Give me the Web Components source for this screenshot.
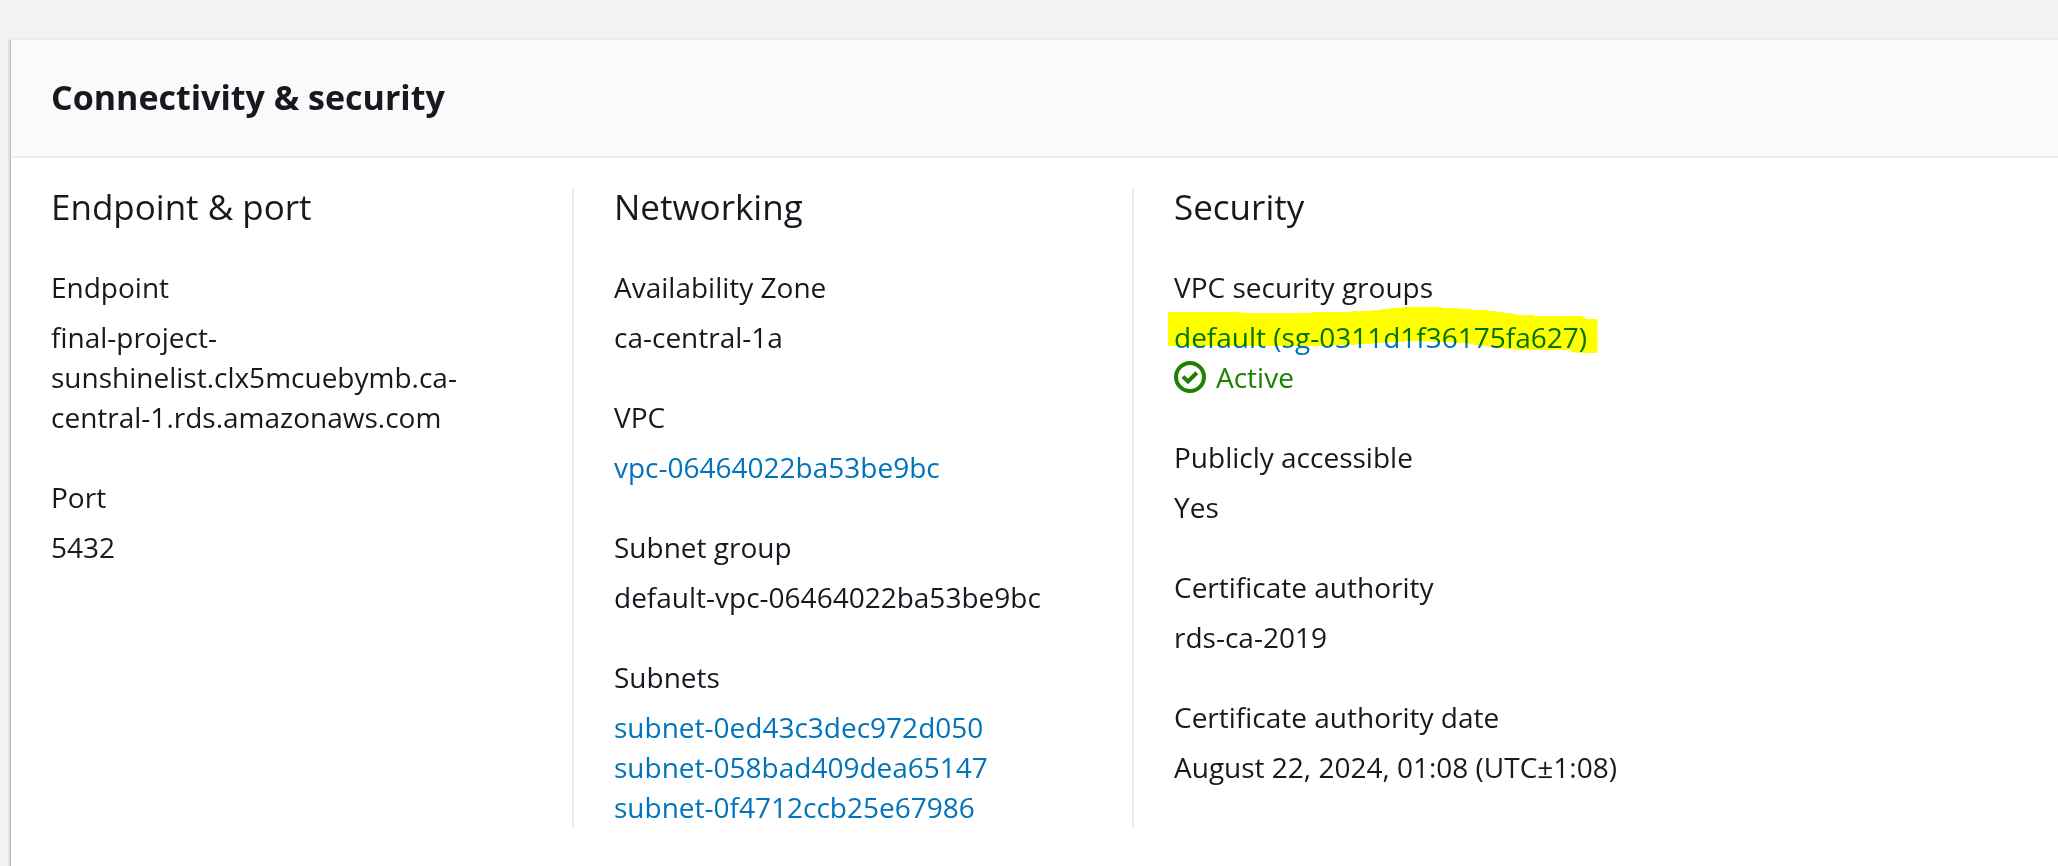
<!DOCTYPE html>
<html lang="en">
<head>
<meta charset="utf-8">
<title>Connectivity &amp; security</title>
<style>
  html { height: 100%; overflow: hidden; }
  body {
    box-sizing: border-box;
    min-height: 100%;
    margin: 0;
    padding: 38px 0 0 11px;
    display: flex;
    flex-direction: column;
    background: #f2f3f3;
    color: #16191f;
    font: 28px/40px "Open Sans", "Noto Sans", sans-serif;
  }
</style>
</head>
<body>

<rds-panel heading="Connectivity &amp; security">
  <rds-column heading="Endpoint &amp; port">
    <rds-field label="Endpoint">final-project-sunshinelist.clx5mcuebymb.ca-<wbr>central-1.rds.amazonaws.com</rds-field>
    <rds-field label="Port">5432</rds-field>
  </rds-column>
  <rds-column heading="Networking" divided>
    <rds-field label="Availability Zone">ca-central-1a</rds-field>
    <rds-field label="VPC"><rds-link to="#vpc">vpc-06464022ba53be9bc</rds-link></rds-field>
    <rds-field label="Subnet group">default-vpc-06464022ba53be9bc</rds-field>
    <rds-field label="Subnets">
      <rds-link to="#subnet-1">subnet-0ed43c3dec972d050</rds-link>
      <rds-link to="#subnet-2">subnet-058bad409dea65147</rds-link>
      <rds-link to="#subnet-3">subnet-0f4712ccb25e67986</rds-link>
    </rds-field>
  </rds-column>
  <rds-column heading="Security" divided>
    <rds-field label="VPC security groups">
      <marker-highlight><rds-link to="#security-group">default (sg-0311d1f36175fa627)</rds-link></marker-highlight>
      <rds-status>Active</rds-status>
    </rds-field>
    <rds-field label="Publicly accessible">Yes</rds-field>
    <rds-field label="Certificate authority">rds-ca-2019</rds-field>
    <rds-field label="Certificate authority date">August 22, 2024, 01:08 (UTC±1:08)</rds-field>
  </rds-column>
</rds-panel>

<script>
  class BaseElement extends HTMLElement {
    connectedCallback() {
      if (this.shadowRoot) return;
      const template = document.createElement('template');
      template.innerHTML = this.constructor.markup;
      const root = this.attachShadow({ mode: 'open' });
      root.append(template.content.cloneNode(true));
      this.fill(root);
    }
    fill() {}
  }

  class RdsPanel extends BaseElement {
    static markup = `
      <style>
        :host {
          display: block;
          flex: 1;
          background: #fff;
          box-shadow: 0 2px 2px 0 rgba(0, 28, 36, .3), -2px 2px 2px 0 rgba(0, 28, 36, .15);
        }
        header {
          padding: 38px 40px 40px;
          border: solid #eaeded;
          border-width: 2px 0;
          background: #fafafa;
        }
        h2 { margin: 0; font-size: 34px; line-height: 38px; font-weight: 700; }
        .columns {
          display: grid;
          grid-template-columns: 561fr 560fr 926fr;
          padding: 30px 0;
        }
      </style>
      <header><h2></h2></header>
      <div class="columns"><slot></slot></div>`;
    fill(root) { root.querySelector('h2').textContent = this.getAttribute('heading'); }
  }

  class RdsColumn extends BaseElement {
    static markup = `
      <style>
        :host { display: block; min-width: 0; padding: 0 40px 1px; }
        :host([divided]) { border-left: 2px solid #eaeded; }
        h3 { margin: 0 0 41px; font-size: 35px; line-height: 38px; font-weight: 400; }
        .fields { display: grid; gap: 40px; }
      </style>
      <h3></h3>
      <div class="fields"><slot></slot></div>`;
    fill(root) { root.querySelector('h3').textContent = this.getAttribute('heading'); }
  }

  class RdsField extends BaseElement {
    static markup = `
      <style>
        :host { display: block; }
        .label { margin-bottom: 10px; }
      </style>
      <div class="label"></div>
      <div><slot></slot></div>`;
    fill(root) { root.querySelector('.label').textContent = this.getAttribute('label'); }
  }

  class RdsLink extends BaseElement {
    static markup = `
      <style>
        :host { display: block; }
        a { color: #0073bb; text-decoration: none; }
        a:hover { text-decoration: underline; }
      </style>
      <a><slot></slot></a>`;
    fill(root) { root.querySelector('a').href = this.getAttribute('to'); }
  }

  class RdsStatus extends BaseElement {
    static markup = `
      <style>
        :host { display: flex; align-items: center; gap: 10px; color: #1d8102; }
        svg { flex: none; width: 32px; height: 32px; fill: none; stroke: currentColor; stroke-width: 2; }
      </style>
      <svg viewBox="0 0 16 16" aria-hidden="true">
        <circle cx="8" cy="8" r="7"/>
        <path d="M4.5 7.8 7 10.2 11.4 5.9"/>
      </svg>
      <span><slot></slot></span>`;
  }

  /* Freehand yellow marker stroke that tints the text beneath it. */
  class MarkerHighlight extends BaseElement {
    static markup = `
      <style>
        :host { display: block; position: relative; width: fit-content; }
        svg {
          position: absolute;
          left: -6px;
          top: -10px;
          width: 430px;
          height: 47px;
          fill: #ff0;
          mix-blend-mode: multiply;
          pointer-events: none;
        }
      </style>
      <slot></slot>
      <svg viewBox="0 0 430 47" aria-hidden="true">
        <path d="M0 5H72V6H143V5H184V4H204V3H213V2H222V1H235V0H274V1H292V2H303V3H320V4H328V5H335V6H343V7H349V8H366V9H414V10H417V12H429.5V46H409V45H403V43H347V42H337V41H328V40H321V39H313V38H306V37H300V36H285V35H265V34H236V35H217V36H205V37H188V38H165V39H0Z"/>
      </svg>`;
  }

  customElements.define('rds-panel', RdsPanel);
  customElements.define('rds-column', RdsColumn);
  customElements.define('rds-field', RdsField);
  customElements.define('rds-link', RdsLink);
  customElements.define('rds-status', RdsStatus);
  customElements.define('marker-highlight', MarkerHighlight);
</script>
</body>
</html>
